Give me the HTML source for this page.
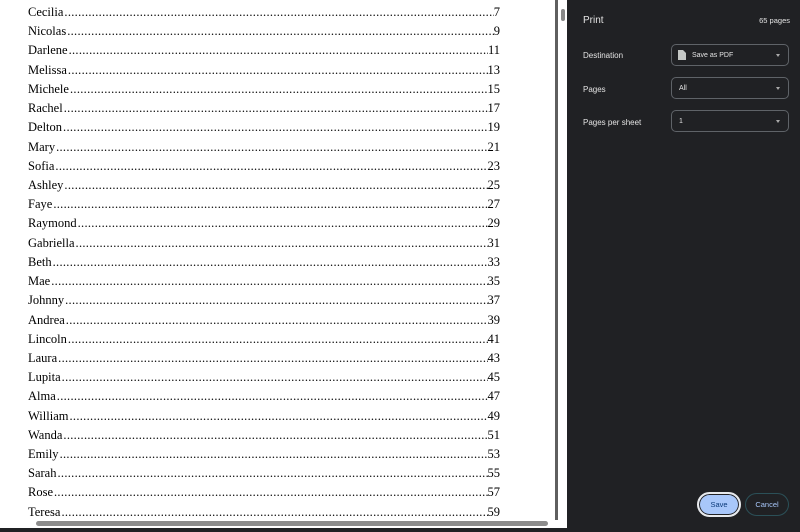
<!DOCTYPE html>
<html><head><style>
*{margin:0;padding:0;box-sizing:border-box}
body{width:800px;height:532px;overflow:hidden;position:relative;background:#fff;font-family:"Liberation Sans",sans-serif}
#toc{position:absolute;left:28px;top:4px;width:472px;font-family:"Liberation Serif",serif;font-size:12.5px;color:#000}
.r{display:flex;height:19.23px;line-height:16px;align-items:flex-start;overflow:hidden}
.r .n{white-space:nowrap;padding-right:1px}
.r .d{flex:1;overflow:hidden;white-space:nowrap;letter-spacing:0.3px}
.r .p{white-space:nowrap}
#div{position:absolute;left:555px;top:0;width:3px;height:520px;background:#5f5f5f}
#vs{position:absolute;left:558px;top:0;width:9px;height:520px;background:#fff}
#vs .t{position:absolute;left:3px;top:9px;width:4px;height:12px;background:#888;border-radius:2px}
#hs{position:absolute;left:0;top:519px;width:555px;height:9px;background:#fff}
#hs .t{position:absolute;left:36px;top:2px;width:512px;height:5px;background:#8c8c8c;border-radius:3px}
#bot{position:absolute;left:0;top:528px;width:800px;height:4px;background:#202124}
#panel{position:absolute;left:567px;top:0;width:233px;height:532px;background:#202124;color:#e3e3e3}
.lbl{position:absolute;left:16px;font-size:8px;color:#e3e3e3}
.sel{position:absolute;left:104px;width:118px;height:22px;border:1px solid #5f6368;border-radius:5px;font-size:7px;display:flex;align-items:center;padding-left:7px}
.sel:after{content:"";position:absolute;right:8px;top:9px;border-left:2px solid transparent;border-right:2px solid transparent;border-top:3px solid #aaa}
</style></head><body>
<div id="toc">
<div class="r"><span class="n">Cecilia</span><span class="d">................................................................................................................................................................</span><span class="p">7</span></div>
<div class="r"><span class="n">Nicolas</span><span class="d">................................................................................................................................................................</span><span class="p">9</span></div>
<div class="r"><span class="n">Darlene</span><span class="d">................................................................................................................................................................</span><span class="p">11</span></div>
<div class="r"><span class="n">Melissa</span><span class="d">................................................................................................................................................................</span><span class="p">13</span></div>
<div class="r"><span class="n">Michele</span><span class="d">................................................................................................................................................................</span><span class="p">15</span></div>
<div class="r"><span class="n">Rachel</span><span class="d">................................................................................................................................................................</span><span class="p">17</span></div>
<div class="r"><span class="n">Delton</span><span class="d">................................................................................................................................................................</span><span class="p">19</span></div>
<div class="r"><span class="n">Mary</span><span class="d">................................................................................................................................................................</span><span class="p">21</span></div>
<div class="r"><span class="n">Sofia</span><span class="d">................................................................................................................................................................</span><span class="p">23</span></div>
<div class="r"><span class="n">Ashley</span><span class="d">................................................................................................................................................................</span><span class="p">25</span></div>
<div class="r"><span class="n">Faye</span><span class="d">................................................................................................................................................................</span><span class="p">27</span></div>
<div class="r"><span class="n">Raymond</span><span class="d">................................................................................................................................................................</span><span class="p">29</span></div>
<div class="r"><span class="n">Gabriella</span><span class="d">................................................................................................................................................................</span><span class="p">31</span></div>
<div class="r"><span class="n">Beth</span><span class="d">................................................................................................................................................................</span><span class="p">33</span></div>
<div class="r"><span class="n">Mae</span><span class="d">................................................................................................................................................................</span><span class="p">35</span></div>
<div class="r"><span class="n">Johnny</span><span class="d">................................................................................................................................................................</span><span class="p">37</span></div>
<div class="r"><span class="n">Andrea</span><span class="d">................................................................................................................................................................</span><span class="p">39</span></div>
<div class="r"><span class="n">Lincoln</span><span class="d">................................................................................................................................................................</span><span class="p">41</span></div>
<div class="r"><span class="n">Laura</span><span class="d">................................................................................................................................................................</span><span class="p">43</span></div>
<div class="r"><span class="n">Lupita</span><span class="d">................................................................................................................................................................</span><span class="p">45</span></div>
<div class="r"><span class="n">Alma</span><span class="d">................................................................................................................................................................</span><span class="p">47</span></div>
<div class="r"><span class="n">William</span><span class="d">................................................................................................................................................................</span><span class="p">49</span></div>
<div class="r"><span class="n">Wanda</span><span class="d">................................................................................................................................................................</span><span class="p">51</span></div>
<div class="r"><span class="n">Emily</span><span class="d">................................................................................................................................................................</span><span class="p">53</span></div>
<div class="r"><span class="n">Sarah</span><span class="d">................................................................................................................................................................</span><span class="p">55</span></div>
<div class="r"><span class="n">Rose</span><span class="d">................................................................................................................................................................</span><span class="p">57</span></div>
<div class="r"><span class="n">Teresa</span><span class="d">................................................................................................................................................................</span><span class="p">59</span></div>
</div>
<div id="div"></div>
<div id="vs"><div class="t"></div></div>
<div id="hs"><div class="t"></div></div>
<div id="bot"></div>
<div id="panel">
<div style="position:absolute;left:16px;top:15px;font-size:10px;color:#e3e3e3">Print</div>
<div style="position:absolute;right:10px;top:16px;font-size:7.5px;color:#e3e3e3">65 pages</div>
<div class="lbl" style="top:51px">Destination</div>
<div class="sel" style="top:44px;padding-left:20px"><svg style="position:absolute;left:6px;top:5px" width="8" height="10" viewBox="0 0 8 10"><path d="M0 0H5L8 3V10H0Z" fill="#c4c7c5"/></svg>Save as PDF</div>
<div class="lbl" style="top:85px">Pages</div>
<div class="sel" style="top:77px">All</div>
<div class="lbl" style="top:118px">Pages per sheet</div>
<div class="sel" style="top:110px">1</div>
<div style="position:absolute;left:130px;top:492px;width:44px;height:25px;border-radius:13px;border:2px solid #e8eaed;background:#a8c7fa;color:#0b3a7a;font-size:7.5px;text-align:center;line-height:21px;box-shadow:0 0 0 1px #202124 inset">Save</div>
<div style="position:absolute;left:178px;top:493px;width:44px;height:23px;border-radius:12px;border:1px solid #2b5058;color:#a8c7fa;font-size:7.5px;text-align:center;line-height:21px">Cancel</div>
</div>
</body></html>
